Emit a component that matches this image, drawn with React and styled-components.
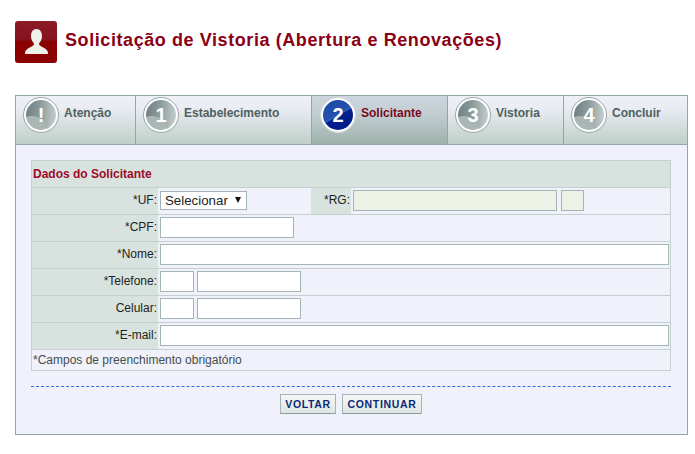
import styled, { createGlobalStyle } from "styled-components";

const GlobalStyle = createGlobalStyle`
  body {
    margin: 0;
    background: #fff;
    font-family: "Liberation Sans", Arial, sans-serif;
  }
`;

const Page = styled.div`
  width: 673px;
  padding: 21px 0 0 15px;
`;

const Header = styled.header`
  display: flex;
  align-items: center;
  gap: 8px;
  height: 42px;
  margin-bottom: 32px;
`;

const Title = styled.h1`
  margin: 0 0 4px;
  font-size: 18px;
  font-weight: bold;
  letter-spacing: 0.58px;
  color: #8a0016;
`;

const Panel = styled.div`
  box-sizing: border-box;
  width: 673px;
  height: 340px;
  border: 1px solid #93a5a6;
  background: #f0f1fa;
`;

const Tabs = styled.div`
  display: flex;
  box-sizing: border-box;
  height: 49px;
  border-bottom: 1px solid #93a5a6;
`;

const Tab = styled.div`
  box-sizing: border-box;
  width: ${(p) => p.$width}px;
  display: flex;
  align-items: flex-start;
  gap: 5px;
  padding: 1px 0 0 ${(p) => p.$pad}px;
  border-right: ${(p) => (p.$last ? "none" : "1px solid #93a5a6")};
  background: ${(p) =>
    p.$active
      ? "linear-gradient(#ccd5dd 0%, #c3ced3 35%, #9eb2ab 100%)"
      : "linear-gradient(#eef0f9 0%, #e9ecf3 25%, #c0cfc8 100%)"};
`;

const Badge = styled.span`
  box-sizing: border-box;
  flex: none;
  width: 34px;
  height: 34px;
  margin: 1px;
  border-radius: 50%;
  border: 2px solid #fff;
  outline: 1px solid ${(p) => (p.$active ? "#d5dce0" : "#9aa8a8")};
  display: flex;
  align-items: center;
  justify-content: center;
  color: #fff;
  font-size: 20px;
  font-weight: bold;
  background: ${(p) =>
    p.$active
      ? "linear-gradient(150deg, #1f4ba6 0%, #2350ab 46%, #2f62c0 50%, #00208e 54%, #001a86 100%)"
      : "radial-gradient(circle at 20% 105%, #a9b6b4 0 38%, transparent 40%), linear-gradient(95deg, #6f7f7f 0%, #8b9a9a 45%, #c9d1d1 100%)"};
`;

const TabLabel = styled.span`
  font-size: 12px;
  font-weight: bold;
  line-height: 14px;
  margin-top: 9px;
  color: ${(p) => (p.$active ? "#7a0a20" : "#4f6060")};
`;

const Body = styled.div`
  padding: 15px 15px 0;
`;

const Table = styled.div`
  width: 640px;
  border: 1px solid #c3d0ce;
  border-bottom: none;
  box-sizing: border-box;
`;

const Heading = styled.div`
  height: 27px;
  box-sizing: border-box;
  padding-left: 1px;
  background: #d8e2df;
  border-bottom: 1px solid #c3d0ce;
  font-size: 12px;
  font-weight: bold;
  line-height: 26px;
  color: #a00a28;
`;

const Row = styled.div`
  display: flex;
  height: 27px;
  box-sizing: border-box;
  border-bottom: 1px solid #c3d0ce;
`;

const Label = styled.label`
  box-sizing: border-box;
  flex: none;
  width: ${(p) => p.$width || 126}px;
  padding-right: 1px;
  background: #d8e2df;
  text-align: right;
  font-size: 12px;
  line-height: 24px;
  color: #222;
`;

const Cell = styled.div`
  display: flex;
  align-items: center;
  gap: ${(p) => p.$gap || 3}px;
  padding: 0 0 1px 2px;
  flex: ${(p) => (p.$fixed ? "none" : 1)};
  width: ${(p) => (p.$fixed ? `${p.$fixed}px` : "auto")};
  box-sizing: border-box;
`;

const Input = styled.input`
  box-sizing: border-box;
  width: ${(p) => (p.$width ? `${p.$width}px` : "100%")};
  height: 21px;
  margin: 0;
  padding: 0 2px;
  border: 1px solid #a3b5b5;
  background: ${(p) => (p.$locked ? "#edf2e6" : "#fff")};
  outline: none;
`;

const FakeSelect = styled.div`
  box-sizing: border-box;
  width: 87px;
  height: 19px;
  display: flex;
  align-items: center;
  justify-content: space-between;
  padding: 0 5px 0 4px;
  border: 1px solid #a3b5b5;
  background: #fff;
  font-size: 13.3px;
  color: #222;
`;

const Arrow = styled.span`
  width: 0;
  height: 0;
  margin-bottom: 2px;
  border-left: 3.5px solid transparent;
  border-right: 3.5px solid transparent;
  border-top: 6px solid #111;
`;

const Note = styled.div`
  height: 21px;
  box-sizing: border-box;
  padding-left: 1px;
  border-bottom: 1px solid #c3d0ce;
  font-size: 12px;
  line-height: 20px;
  color: #444e4e;
`;

const Divider = styled.hr`
  width: 640px;
  margin: 15px 0 7px;
  border: none;
  border-top: 1px dashed #2a6fe8;
`;

const Actions = styled.div`
  display: flex;
  justify-content: center;
  gap: 6px;
  width: 640px;
`;

const Button = styled.button`
  box-sizing: border-box;
  width: ${(p) => p.$width}px;
  height: 20px;
  padding: 0;
  border: 1px solid #a3b5b5;
  border-bottom-color: #8a9c9c;
  background: linear-gradient(#f6f8f6, #dfe6e2);
  font-family: "Liberation Sans", Arial, sans-serif;
  font-size: 10.5px;
  font-weight: bold;
  letter-spacing: 0.65px;
  color: #0a2a7a;
`;

const UserIcon = () => (
  <svg width="42" height="42" viewBox="0 0 42 42">
    <defs>
      <linearGradient id="red" x1="0" y1="0" x2="0" y2="1">
        <stop offset="0" stopColor="#8d1a26" />
        <stop offset="0.44" stopColor="#85131f" />
        <stop offset="0.5" stopColor="#8b0000" />
        <stop offset="1" stopColor="#8b0000" />
      </linearGradient>
    </defs>
    <rect width="42" height="42" rx="3" fill="url(#red)" />
    <path
      d="M21.500 8c-3.600 0-5.500 3-5.500 7 0 3 1.200 5.500 2.800 7v2c-2 2-6 3-8 5.500-.6 .8-.8 2-.8 3.500h23c0-1.500-.2-2.700-.8-3.500-2-2.500-6-3.500-8-5.500v-2c1.600-1.500 2.800-4 2.800-7 0-4-1.900-7-5.500-7z"
      fill="#eef0ea"
    />
  </svg>
);

const steps = [
  { mark: "!", label: "Atenção", width: 120, pad: 7 },
  { mark: "1", label: "Estabelecimento", width: 176, pad: 7 },
  { mark: "2", label: "Solicitante", width: 136, pad: 8, active: true },
  { mark: "3", label: "Vistoria", width: 116, pad: 7 },
  { mark: "4", label: "Concluir", width: 123, pad: 7, last: true },
];

export default function App() {
  return (
    <Page>
      <GlobalStyle />
      <Header>
        <UserIcon />
        <Title>Solicitação de Vistoria (Abertura e Renovações)</Title>
      </Header>
      <Panel>
        <Tabs>
          {steps.map((s) => (
            <Tab key={s.label} $width={s.width} $pad={s.pad} $active={s.active} $last={s.last}>
              <Badge $active={s.active}>{s.mark}</Badge>
              <TabLabel $active={s.active}>{s.label}</TabLabel>
            </Tab>
          ))}
        </Tabs>
        <Body>
          <Table>
            <Heading>Dados do Solicitante</Heading>
            <Row>
              <Label>*UF:</Label>
              <Cell $fixed={153}>
                <FakeSelect>
                  Selecionar
                  <Arrow />
                </FakeSelect>
              </Cell>
              <Label $width={40}>*RG:</Label>
              <Cell $gap={4}>
                <Input $width={204} $locked readOnly />
                <Input $width={23} $locked readOnly />
              </Cell>
            </Row>
            <Row>
              <Label>*CPF:</Label>
              <Cell>
                <Input $width={134} />
              </Cell>
            </Row>
            <Row>
              <Label>*Nome:</Label>
              <Cell>
                <Input $width={509} />
              </Cell>
            </Row>
            <Row>
              <Label>*Telefone:</Label>
              <Cell>
                <Input $width={34} />
                <Input $width={104} />
              </Cell>
            </Row>
            <Row>
              <Label>Celular:</Label>
              <Cell>
                <Input $width={34} />
                <Input $width={104} />
              </Cell>
            </Row>
            <Row>
              <Label>*E-mail:</Label>
              <Cell>
                <Input $width={509} />
              </Cell>
            </Row>
            <Note>*Campos de preenchimento obrigatório</Note>
          </Table>
          <Divider />
          <Actions>
            <Button $width={56}>VOLTAR</Button>
            <Button $width={80}>CONTINUAR</Button>
          </Actions>
        </Body>
      </Panel>
    </Page>
  );
}
